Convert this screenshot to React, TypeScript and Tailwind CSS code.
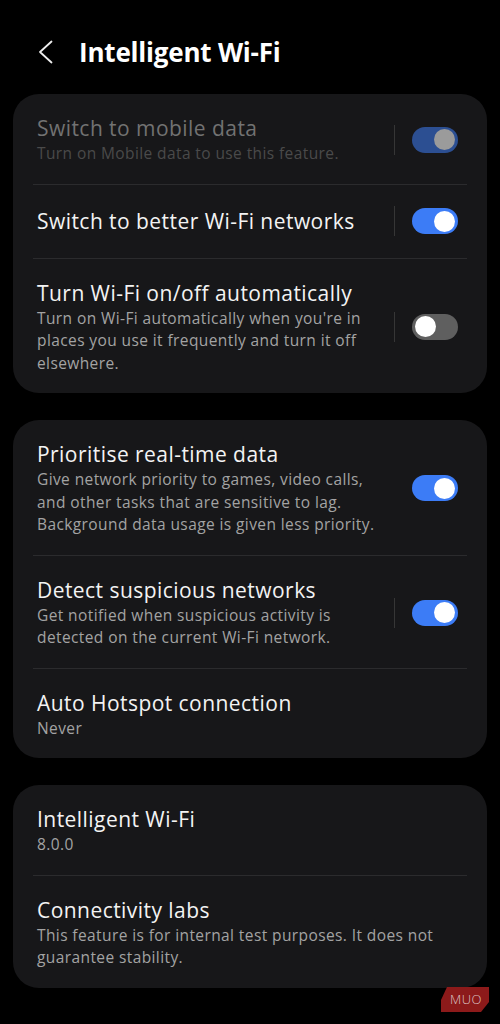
import { ReactNode } from "react";

const font = { fontFamily: "'Open Sans', 'Noto Sans', sans-serif" };

type ToggleProps = { on: boolean; disabled?: boolean };

const Toggle = ({ on, disabled }: ToggleProps) => {
  const track = disabled ? "bg-[#2c4f92]" : on ? "bg-[#3c7cf6]" : "bg-[#5f5f5f]";
  const thumb = disabled ? "bg-[#9b9b9b]" : "bg-white";
  return (
    <div className={`flex h-[26px] w-[46px] items-center rounded-full px-[3px] ${track} ${on ? "justify-end" : "justify-start"}`}>
      <div className={`h-[21px] w-[21px] rounded-full ${thumb}`} />
    </div>
  );
};

type RowProps = {
  title: string;
  sub?: ReactNode;
  toggle?: ToggleProps;
  sep?: boolean;
  dim?: boolean;
  tall?: boolean;
};

const Row = ({ title, sub, toggle, sep, dim, tall }: RowProps) => (
  <div className={`flex items-center pl-6 pr-[29px] ${tall ? "h-[73px]" : "pt-[21px] pb-[19px]"}`}>
    <div className="min-w-0 flex-1">
      <div className={`text-[21px] leading-[26px] tracking-[0.45px] ${dim ? "text-[#727272]" : "text-[#f3f3f3]"}`}>
        {title}
      </div>
      {sub && (
        <div
          className={`mt-px text-[15.5px] leading-[22.5px] tracking-[0.4px] ${dim ? "text-[#4a4a4a]" : "text-[#a3a3a3]"}`}
        >
          {sub}
        </div>
      )}
    </div>
    {toggle && (
      <div className="flex items-center">
        {sep && <div className="mr-[17px] h-[30px] w-px bg-[#363636]" />}
        <Toggle {...toggle} />
      </div>
    )}
  </div>
);

const Divider = () => <div className="mx-5 h-px bg-[#2b2b2d]" />;

const Card = ({ children }: { children: ReactNode }) => (
  <div className="mx-[13px] rounded-[26px] bg-[#171719]">{children}</div>
);

export default function App() {
  return (
    <div className="relative h-[1024px] w-[500px] overflow-hidden bg-black" style={font}>
      <div className="flex h-[94px] items-center pl-[38px] pt-[10px]">
        <svg width="16" height="24" viewBox="0 0 16 24" fill="none">
          <path d="M13.5 1.5 L2 12 L13.5 22.5" stroke="#eeeeee" strokeWidth="1.8" strokeLinecap="round" strokeLinejoin="round" />
        </svg>
        <div className="ml-[25px] text-[26px] font-bold tracking-[-0.2px] text-white">Intelligent Wi-Fi</div>
      </div>

      <div className="flex flex-col gap-[27px]">
        <Card>
          <Row
            title="Switch to mobile data"
            sub="Turn on Mobile data to use this feature."
            toggle={{ on: true, disabled: true }}
            sep
            dim
          />
          <Divider />
          <Row title="Switch to better Wi-Fi networks" toggle={{ on: true }} sep tall />
          <Divider />
          <Row
            title="Turn Wi-Fi on/off automatically"
            sub={
              <>
                Turn on Wi-Fi automatically when you're in
                <br />
                places you use it frequently and turn it off
                <br />
                elsewhere.
              </>
            }
            toggle={{ on: false }}
            sep
          />
        </Card>

        <Card>
          <Row
            title="Prioritise real-time data"
            sub={
              <>
                Give network priority to games, video calls,
                <br />
                and other tasks that are sensitive to lag.
                <br />
                Background data usage is given less priority.
              </>
            }
            toggle={{ on: true }}
          />
          <Divider />
          <Row
            title="Detect suspicious networks"
            sub={
              <>
                Get notified when suspicious activity is
                <br />
                detected on the current Wi-Fi network.
              </>
            }
            toggle={{ on: true }}
            sep
          />
          <Divider />
          <Row title="Auto Hotspot connection" sub="Never" />
        </Card>

        <Card>
          <Row title="Intelligent Wi-Fi" sub="8.0.0" />
          <Divider />
          <Row
            title="Connectivity labs"
            sub={
              <>
                This feature is for internal test purposes. It does not
                <br />
                guarantee stability.
              </>
            }
          />
        </Card>
      </div>

      {/* watermark */}
      <div
        className="absolute left-[441px] top-[987px] flex h-[25px] w-[48px] items-center justify-center bg-[#8c1a1a] pl-[2px] text-[13px] font-light tracking-[0.5px] text-[#dcc4c4]"
        style={{ clipPath: "polygon(6px 0, 100% 0, 100% 60%, 40px 100%, 0 100%, 0 13px)" }}
      >
        MUO
      </div>
    </div>
  );
}
